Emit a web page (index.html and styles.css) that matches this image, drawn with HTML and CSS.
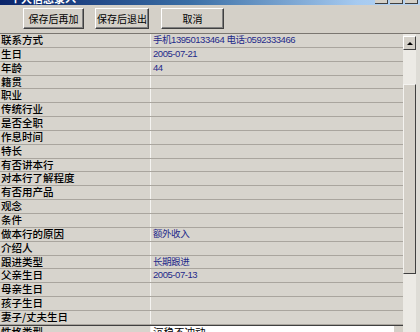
FILE: index.html
```html
<!DOCTYPE html>
<html lang="zh-CN">
<head>
  <meta charset="UTF-8" />
  <title>个人信息录入</title>
  <link rel="stylesheet" href="styles.css">
</head>
<body>
  <div class="window">
    <div class="titlebar">
      <span class="title">个人信息录入</span>
      <div class="ctrls"><span></span><span></span><span></span></div>
    </div>

    <div class="toolbar">
      <button class="btn btn-add">保存后再加</button>
      <button class="btn btn-exit">保存后退出</button>
      <button class="btn btn-cancel">取消</button>
    </div>

    <div class="grid-wrap">
      <div class="grid">
        <div class="row"><div class="key">联系方式</div><div class="val">手机13950133464 电话:0592333466</div></div>
        <div class="row"><div class="key">生日</div><div class="val">2005-07-21</div></div>
        <div class="row"><div class="key">年龄</div><div class="val">44</div></div>
        <div class="row"><div class="key">籍贯</div><div class="val"></div></div>
        <div class="row"><div class="key">职业</div><div class="val"></div></div>
        <div class="row"><div class="key">传统行业</div><div class="val"></div></div>
        <div class="row"><div class="key">是否全职</div><div class="val"></div></div>
        <div class="row"><div class="key">作息时间</div><div class="val"></div></div>
        <div class="row"><div class="key">特长</div><div class="val"></div></div>
        <div class="row"><div class="key">有否讲本行</div><div class="val"></div></div>
        <div class="row"><div class="key">对本行了解程度</div><div class="val"></div></div>
        <div class="row"><div class="key">有否用产品</div><div class="val"></div></div>
        <div class="row"><div class="key">观念</div><div class="val"></div></div>
        <div class="row"><div class="key">条件</div><div class="val"></div></div>
        <div class="row"><div class="key">做本行的原因</div><div class="val">额外收入</div></div>
        <div class="row"><div class="key">介绍人</div><div class="val"></div></div>
        <div class="row"><div class="key">跟进类型</div><div class="val">长期跟进</div></div>
        <div class="row"><div class="key">父亲生日</div><div class="val">2005-07-13</div></div>
        <div class="row"><div class="key">母亲生日</div><div class="val"></div></div>
        <div class="row"><div class="key">孩子生日</div><div class="val"></div></div>
        <div class="row"><div class="key">妻子/丈夫生日</div><div class="val"></div></div>
        <div class="row row-edit"><div class="key">性格类型</div><div class="val editor"><span class="edit-text">沉稳不冲动</span><span class="dots">...</span></div></div>
      </div>

      <div class="scrollbar">
        <div class="arrow"><span class="tri"></span></div>
        <div class="track"><div class="thumb"></div></div>
      </div>
    </div>
  </div>
</body>
</html>
```

FILE: styles.css
```css
* { box-sizing: border-box; }
body {
  margin: 0;
  background: #d4d0c8;
  overflow: hidden;
}
.window {
  width: 420px;
  height: 332px;
  display: flex;
  flex-direction: column;
  overflow: hidden;
  font-family: "Noto Sans CJK SC", sans-serif;
}

/* title bar, only a sliver is visible */
.titlebar {
  height: 5px;
  flex: none;
  display: flex;
  justify-content: space-between;
  overflow: hidden;
  background: linear-gradient(to right, #0a246a 0%, #3a6ea5 45%, #a6caf0 85%, #b8d4f2 100%);
}
.title {
  margin-top: -8px;
  padding-left: 10px;
  color: #fff;
  font-weight: bold;
  font-size: 11px;
  line-height: 12px;
}
.ctrls {
  display: flex;
  gap: 2px;
  padding-right: 2px;
}
.ctrls span {
  width: 13px;
  height: 4px;
  background: #d4d0c8;
  border-right: 1px solid #404040;
  border-bottom: 1px solid #404040;
}

/* toolbar */
.toolbar {
  height: 28px;
  flex: none;
  display: flex;
  align-items: flex-start;
  gap: 11px;
  padding: 3px 0 0 23px;
  background: #d4d0c8;
}
.btn {
  height: 21px;
  padding: 0;
  font-family: "Noto Sans CJK SC", sans-serif;
  font-size: 10px;
  color: #000;
  background: #d4d0c8;
  border: 1px solid;
  border-color: #fff #404040 #404040 #fff;
  box-shadow: inset -1px -1px 0 #808080;
}
.btn-add { width: 61px; }
.btn-exit { width: 54px; }
.btn-cancel { width: 63px; margin-left: 1px; }

/* grid */
.grid-wrap {
  flex: 1;
  display: flex;
  border-top: 1px solid #7a7670;
  overflow: hidden;
}
.grid {
  width: 403px;
  flex: none;
}
.row {
  height: 13.85px;
  display: flex;
  border-bottom: 1px solid #a9a59e;
  background: #d7d4cd;
}
.key {
  width: 151px;
  flex: none;
  padding-left: 1px;
  border-right: 1px solid #f4f3f0;
  font-size: 10.5px;
  font-weight: 500;
  line-height: 12.5px;
  color: #000;
  white-space: nowrap;
}
.val {
  flex: 1;
  padding-left: 2px;
  font-family: "Liberation Sans", "Noto Sans CJK SC", sans-serif;
  font-size: 9.5px;
  letter-spacing: -0.45px;
  line-height: 12.5px;
  color: #1f2a8a;
  white-space: nowrap;
}
.row-edit {
  border-top: 1px solid #404040;
  height: 14px;
}
.editor {
  display: flex;
  justify-content: space-between;
  background: #fff;
  color: #000;
  font-family: "Noto Sans CJK SC", sans-serif;
  font-size: 10.5px;
  letter-spacing: 0;
}
.dots {
  width: 10px;
  background: #d4d0c8;
  font-family: "Liberation Sans", sans-serif;
  font-size: 9px;
  line-height: 8px;
  text-align: center;
  border-left: 1px solid #fff;
}

/* scrollbar */
.scrollbar {
  width: 17px;
  flex: none;
  display: flex;
  flex-direction: column;
  background: #eceae5;
  border-right: 4px solid #dedcd6;
}
.arrow {
  height: 14px;
  margin-top: 2px;
  display: flex;
  align-items: center;
  justify-content: center;
  background: #d4d0c8;
  border: 1px solid;
  border-color: #fff #404040 #404040 #fff;
}
.tri {
  width: 0;
  height: 0;
  border-left: 3px solid transparent;
  border-right: 3px solid transparent;
  border-bottom: 3px solid #000;
}
.track {
  flex: 1;
  padding-top: 34px;
}
.thumb {
  height: 190px;
  background: #d4d0c8;
  border: 1px solid;
  border-color: #f4f3f0 #404040 #404040 #f4f3f0;
}
```
